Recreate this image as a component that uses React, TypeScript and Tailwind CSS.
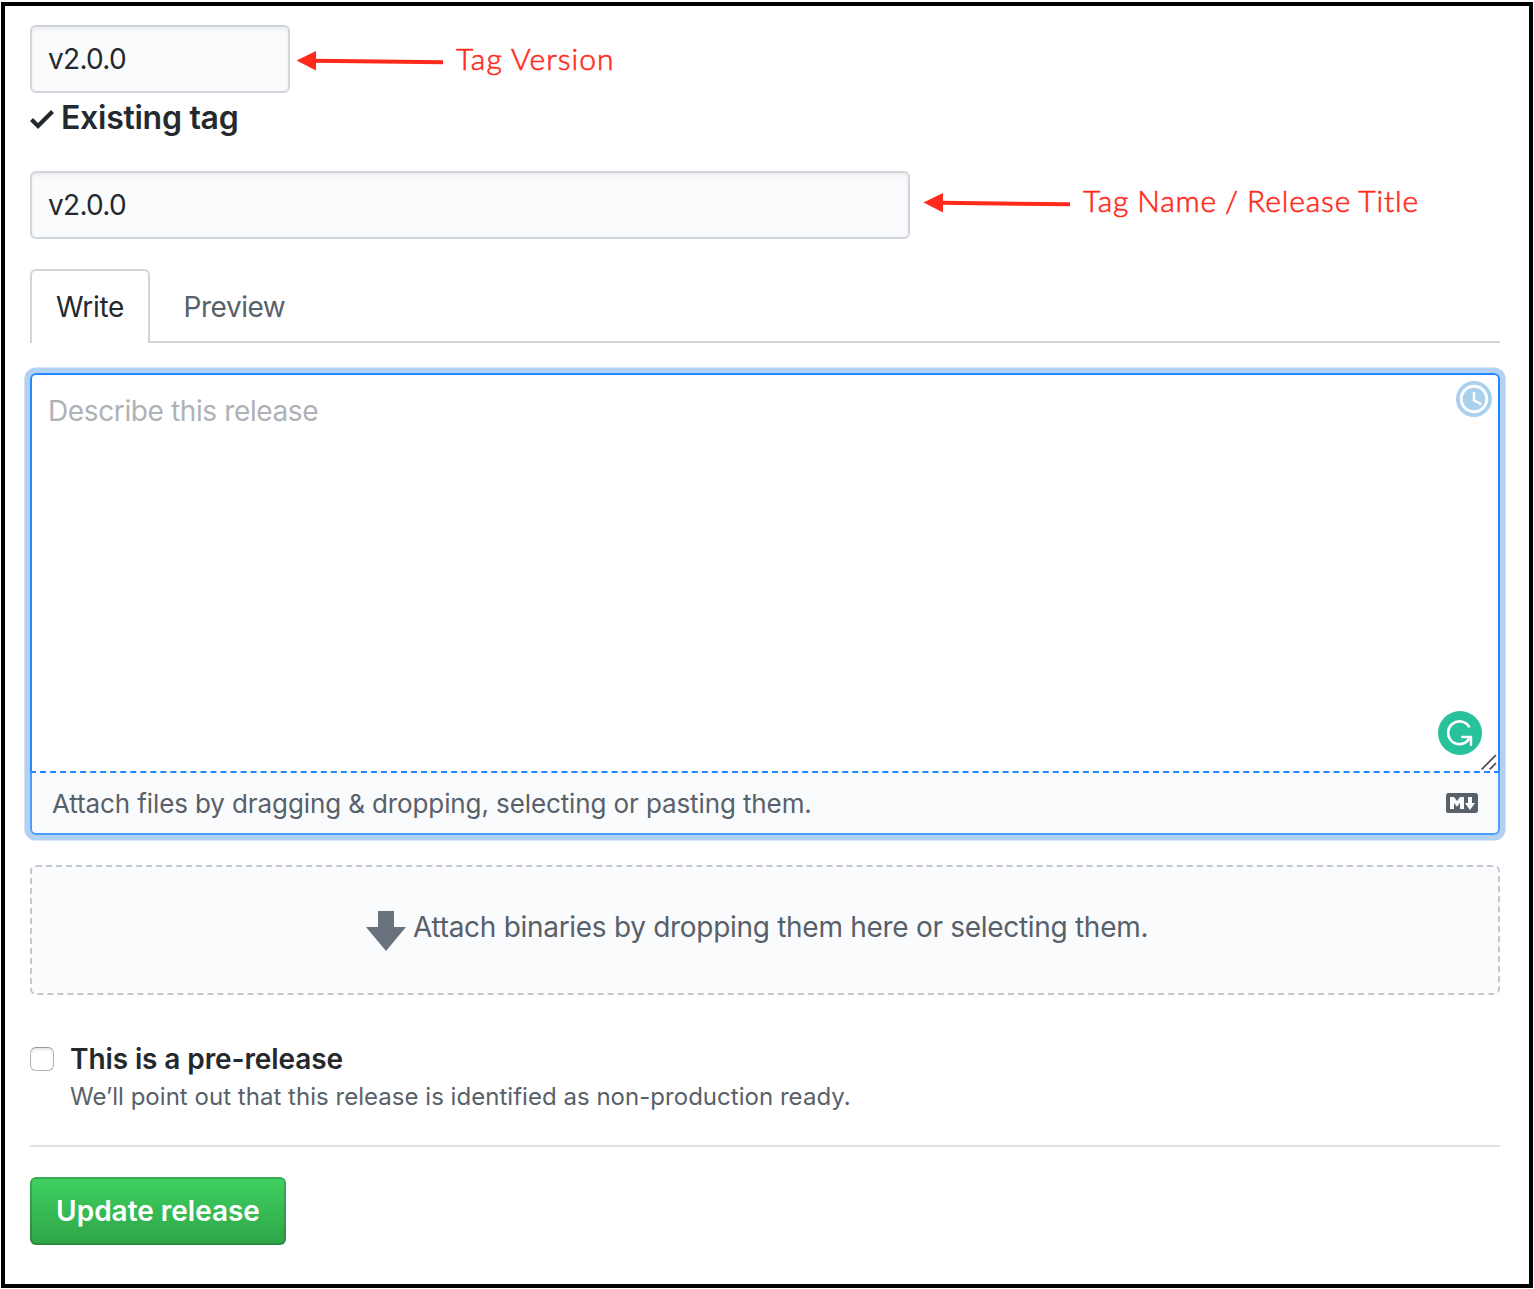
import type { ReactNode } from "react";

function CheckIcon() {
  return (
    <svg viewBox="0 0 12 16" className="mt-1 h-8 w-6 shrink-0 fill-[#24292e]" aria-hidden="true">
      <path d="M12 5l-8 8-4-4 1.5-1.5L4 10l6.5-6.5L12 5z" />
    </svg>
  );
}

function MarkdownIcon() {
  return (
    <svg viewBox="0 3 16 10" className="h-5 w-8 shrink-0 fill-[#586069]" aria-hidden="true">
      <path
        fillRule="evenodd"
        d="M14.85 3H1.15C.52 3 0 3.52 0 4.15v7.69C0 12.48.52 13 1.15 13h13.69c.64 0 1.15-.52 1.15-1.15v-7.7C16 3.52 15.48 3 14.85 3zM9 11H7V8L5.5 9.92 4 8v3H2V5h2l1.5 2L7 5h2v6zm2.99.5L9.5 8H11V5h2v3h1.5l-2.51 3.5z"
      />
    </svg>
  );
}

function DownArrowIcon() {
  return (
    <svg viewBox="0 3 10 10" className="mt-[2px] h-10 w-10 shrink-0 fill-[#6a737d]" aria-hidden="true">
      <path d="M7 7V3H3v4H0l5 6 5-6H7z" />
    </svg>
  );
}

function ClockBadge() {
  return (
    <svg viewBox="0 0 36 36" className="absolute top-[6px] right-[6px] size-9" aria-hidden="true">
      <circle cx="18" cy="18" r="16.1" fill="#fff" stroke="#a9d0ed" strokeWidth="3.8" />
      <circle cx="18" cy="18" r="11.3" fill="#a9d0ed" />
      <path d="M18 11v8.3l7.2 4" fill="none" stroke="#fff" strokeWidth="2.4" />
    </svg>
  );
}

function GrammarBadge() {
  return (
    <svg viewBox="0 0 44 44" className="absolute right-4 bottom-4 size-11" aria-hidden="true">
      <circle cx="22" cy="22" r="22" fill="#27c29c" />
      <path d="M31 15.4A11.4 11.4 0 1 0 30 29.4" fill="none" stroke="#fff" strokeWidth="2.7" strokeLinecap="round" />
      <path d="M24.2 26h8.8v7.8" fill="none" stroke="#fff" strokeWidth="2.4" strokeLinecap="round" />
      <path d="M32.5 26.5l-4.8 5" fill="none" stroke="#fff" strokeWidth="2.4" />
    </svg>
  );
}

function ResizeGrip() {
  return (
    <svg viewBox="0 0 16 16" className="absolute right-px bottom-px size-4" aria-hidden="true">
      <path d="M.7 15.3L14.9 1.1M8.7 15.3l6.2-6.2" fill="none" stroke="#4d4d4d" strokeWidth="1.7" />
    </svg>
  );
}

function Note({ children }: { children: ReactNode }) {
  return (
    <span className="font-['Lato',sans-serif] text-[30px] leading-9 font-light whitespace-nowrap text-[#ff2a1c] [-webkit-text-stroke:0.6px_#ff2a1c]">
      {children}
    </span>
  );
}

function PointerArrow() {
  return (
    <svg viewBox="0 0 147 20" className="h-5 w-[147px] shrink-0" aria-hidden="true">
      <path d="M.5 9.6L20 0v19.6z" fill="#ff2a1c" />
      <path d="M18 9.7l129 1.6" stroke="#ff2a1c" strokeWidth="4" />
    </svg>
  );
}

const field =
  "flex h-[68px] shrink-0 items-center rounded-[6px] border-2 border-[#d1d5da] bg-[#fafbfc] px-4 text-[28px] tracking-[-0.69px] text-[#24292e] shadow-[inset_0_2px_4px_rgba(27,31,35,0.075)] outline-none";

export default function App() {
  return (
    <div className="h-[1289px] w-[1534px] bg-white px-px pt-[2px] font-['Inter',sans-serif] text-[#24292e]">
      <main className="h-[1286px] w-[1532px] border-4 border-black pt-[19px] pr-[29px] pl-[25px]">
        <div className="flex items-center">
          <div className={`${field} w-[260px]`}>v2.0.0</div>
          <div className="ml-[6px] flex pt-[3px]">
            <PointerArrow />
          </div>
          <div className="-mt-[3px] ml-[13px] tracking-[1.05px]">
            <Note>Tag Version</Note>
          </div>
        </div>

        <div className="flex h-12 items-center gap-2">
          <CheckIcon />
          <h3 className="mt-[2px] -ml-px text-[32px] leading-[48px] font-semibold tracking-[-0.27px]">Existing tag</h3>
        </div>

        <div className="mt-[30px] flex items-center">
          <div className={`${field} w-[880px]`}>v2.0.0</div>
          <div className="-mt-[5px] ml-[13px] flex">
            <PointerArrow />
          </div>
          <div className="-mt-[11px] ml-[13px] tracking-[0.86px] [word-spacing:-1px]">
            <Note>Tag Name / Release Title</Note>
          </div>
        </div>

        <nav className="mt-[30px] flex h-[74px] text-[28px]">
          <button className="w-[120px] rounded-t-[6px] border-2 border-b-0 border-[#d1d5da] tracking-[-0.3px]">Write</button>
          <div className="flex-1 border-b-2 border-[#d1d5da] pt-[2px] pl-[33.5px]">
            <button className="h-full pt-[2px] tracking-[-0.45px] text-[#586069]">Preview</button>
          </div>
        </nav>

        <section className="mt-[30px] rounded-[6px] shadow-[0_0_0_5.6px_rgba(3,102,214,0.3)]">
          <div className="relative h-[398px] rounded-t-[6px] border-2 border-b-0 border-[#2188ff] bg-white px-4 pt-[15px] text-[28px] leading-[42px] tracking-[-0.38px] text-[#aeb2b7]">
            Describe this release
            <ClockBadge />
            <GrammarBadge />
            <ResizeGrip />
          </div>
          <div className="flex h-16 items-center justify-between rounded-b-[6px] border-2 border-[#4a9eff] border-t-[#2188ff] [border-top-style:dashed] bg-[#fafbfc] pr-5 pl-5 text-[26px] tracking-[-0.11px] text-[#586069]">
            <span>Attach files by dragging &amp; dropping, selecting or pasting them.</span>
            <MarkdownIcon />
          </div>
        </section>

        <section className="mt-[30px] flex h-[130px] items-center rounded-[6px] border-2 border-dashed border-[#c3c8cf] bg-[#fafbfc] pl-[334px] text-[28px] tracking-[-0.295px] text-[#586069]">
          <DownArrowIcon />
          <span className="mb-[6px] ml-[7px]">Attach binaries by dropping them here or selecting them.</span>
        </section>

        <div className="mt-[43px] flex">
          <span
            role="checkbox"
            aria-checked="false"
            className="mt-[9px] size-6 shrink-0 rounded-[6px] border border-[#b5b5b5] border-t-[#9a9a9a] bg-white shadow-[inset_0_2px_2px_rgba(0,0,0,0.1)]"
          />
          <div className="ml-4">
            <p className="text-[28px] leading-[42px] font-semibold tracking-[-0.1px]">This is a pre-release</p>
            <p className="pt-px text-2xl leading-8 tracking-[0.03px] text-[#586069]">
              We’ll point out that this release is identified as non-production ready.
            </p>
          </div>
        </div>

        <hr className="mt-[32px] border-t-2 border-[#dfe2e5]" />

        <button className="mt-[30px] h-[68px] w-64 rounded-[6px] border-2 border-[rgba(27,31,35,0.2)] bg-linear-to-b from-[#3fd161] to-[#2fa547] bg-origin-border text-[28px] font-semibold tracking-[-0.02px] text-white">
          Update release
        </button>
      </main>
    </div>
  );
}
